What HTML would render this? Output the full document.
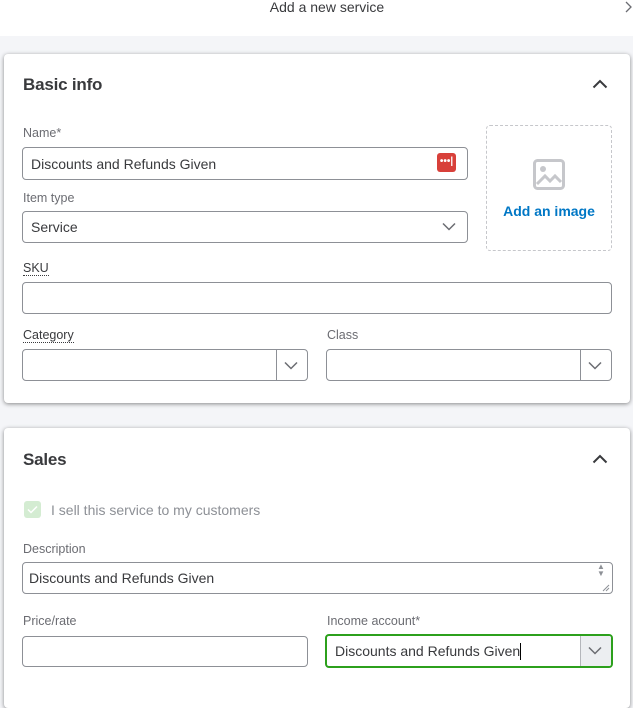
<!DOCTYPE html>
<html><head><meta charset="utf-8"><style>
*{box-sizing:border-box;margin:0;padding:0}
body{width:633px;height:691px;overflow:hidden;background:#f4f5f8;font-family:"Liberation Sans",Arial,sans-serif;position:relative;color:#393a3d}
.top{position:absolute;left:0;top:0;width:633px;height:36px;background:#fff}
.title{position:absolute;left:0;width:654px;text-align:center;top:-1px;font-size:14px;color:#393a3d}
.card{position:absolute;left:4px;width:626px;background:#fff;border-radius:4px;box-shadow:0 1px 4px rgba(0,0,0,.45)}
.abs{position:absolute}
.h{font-size:17px;font-weight:bold;color:#393a3d;letter-spacing:-.2px}
.lbl{font-size:12.5px;color:#6b6c72}
.dot{border-bottom:1px dotted #393a3d}
.in{position:absolute;border:1px solid #8d9096;border-radius:4px;background:#fff;font-size:14px;color:#393a3d;padding-left:8px;display:flex;align-items:center}
.div{position:absolute;top:0;bottom:0;width:1px;background:#8d9096}
</style></head><body>
<div class="top"><div class="title">Add a new service</div>
<svg class="abs" style="left:624px;top:1px" width="9" height="12"><path d="M2 1l5 5-5 5" stroke="#6b6c72" fill="none" stroke-width="1.3"/></svg></div>

<div class="card" style="top:54px;height:349px"></div>
<div class="card" style="top:428px;height:280px"></div>

<div class="abs h" style="left:23px;top:75px">Basic info</div>
<svg class="abs" style="left:592px;top:79px" width="16" height="10"><path d="M1.5 8.5l6.5-6.5 6.5 6.5" stroke="#393a3d" fill="none" stroke-width="2"/></svg>

<div class="abs lbl" style="left:23px;top:126px">Name*</div>
<div class="in" style="left:22px;top:147px;width:446px;height:33px">Discounts and Refunds Given</div>
<div class="abs" style="left:437px;top:153px;width:19px;height:19px;background:#d8403a;border-radius:3px;color:#fff;font-size:10px;line-height:17px;text-align:center;font-weight:bold">•••|</div>

<div class="abs lbl" style="left:23px;top:191px">Item type</div>
<div class="in" style="left:22px;top:211px;width:446px;height:32px">Service</div>
<svg class="abs" style="left:442px;top:222px" width="14" height="9"><path d="M1 1.5l6 6 6-6" stroke="#6b6c72" fill="none" stroke-width="1.5"/></svg>

<div class="abs" style="left:486px;top:125px;width:126px;height:126px;border:1px dashed #c6c7cb;border-radius:4px"></div>
<svg class="abs" style="left:533px;top:159px" width="32" height="32"><rect x="1.5" y="1.5" width="29" height="28" rx="3" stroke="#c6c7cb" stroke-width="3" fill="none"/><circle cx="10" cy="10" r="3" fill="#c6c7cb"/><path d="M4 25l8-8 5 5 5-5 6 6" stroke="#c6c7cb" stroke-width="3" fill="none"/></svg>
<div class="abs" style="left:486px;top:203px;width:126px;text-align:center;font-size:14px;color:#0077c5;font-weight:bold">Add an image</div>

<div class="abs lbl" style="left:23px;top:261px;color:#393a3d"><span class="dot">SKU</span></div>
<div class="in" style="left:22px;top:282px;width:590px;height:32px"></div>

<div class="abs lbl" style="left:23px;top:328px;color:#393a3d"><span class="dot">Category</span></div>
<div class="in" style="left:22px;top:349px;width:286px;height:32px"><div class="div" style="left:253px"></div></div>
<svg class="abs" style="left:284px;top:361px" width="14" height="9"><path d="M1 1.5l6 6 6-6" stroke="#6b6c72" fill="none" stroke-width="1.5"/></svg>
<div class="abs lbl" style="left:327px;top:328px">Class</div>
<div class="in" style="left:326px;top:349px;width:286px;height:32px"><div class="div" style="left:253px"></div></div>
<svg class="abs" style="left:588px;top:361px" width="14" height="9"><path d="M1 1.5l6 6 6-6" stroke="#6b6c72" fill="none" stroke-width="1.5"/></svg>

<div class="abs h" style="left:23px;top:450px">Sales</div>
<svg class="abs" style="left:592px;top:454px" width="16" height="10"><path d="M1.5 8.5l6.5-6.5 6.5 6.5" stroke="#393a3d" fill="none" stroke-width="2"/></svg>

<div class="abs" style="left:24px;top:501px;width:17px;height:17px;background:#d4ecd2;border-radius:3px"></div>
<svg class="abs" style="left:27px;top:505px" width="11" height="9"><path d="M1 4.5l3 3 6-6" stroke="#fff" fill="none" stroke-width="1.5"/></svg>
<div class="abs" style="left:51px;top:502px;font-size:14px;color:#8d9096">I sell this service to my customers</div>

<div class="abs lbl" style="left:23px;top:542px">Description</div>
<div class="in" style="left:22px;top:562px;width:591px;height:32px;padding-left:6px">Discounts and Refunds Given</div>
<div class="abs" style="left:597px;top:563px;font-size:8px;color:#8d9096;line-height:7px">▲<br>▼</div>
<svg class="abs" style="left:602px;top:584px" width="8" height="8"><path d="M7 1L1 7M7 4L4 7" stroke="#8d9096" stroke-width="1"/></svg>

<div class="abs lbl" style="left:23px;top:614px">Price/rate</div>
<div class="in" style="left:22px;top:636px;width:286px;height:31px"></div>
<div class="abs lbl" style="left:327px;top:614px">Income account*</div>
<div class="in" style="left:325px;top:634px;width:288px;height:34px;border:2px solid #2ca01c;overflow:hidden">Discounts and Refunds Given<span style="border-left:1px solid #000;height:17px;margin-left:0"></span>
<div style="position:absolute;left:253px;top:0;bottom:0;right:0;background:#eceef1;border-left:1px solid #b4b6bb"></div></div>
<svg class="abs" style="left:588px;top:646px" width="14" height="9"><path d="M1 1.5l6 6 6-6" stroke="#6b6c72" fill="none" stroke-width="1.5"/></svg>
</body></html>
